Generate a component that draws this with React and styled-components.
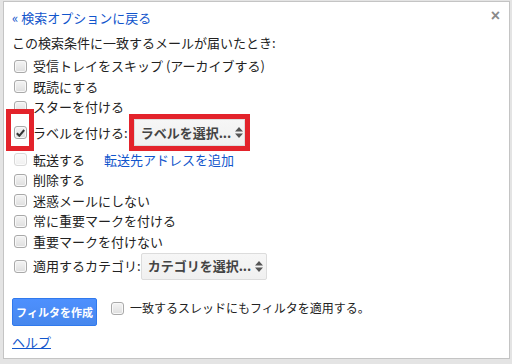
import React from 'react'
import styled, { createGlobalStyle } from 'styled-components'

const GlobalStyle = createGlobalStyle`
  html, body {
    margin: 0;
    padding: 0;
    background: #e4e4e4;
  }
  body {
    font-family: "Noto Sans CJK JP", "Liberation Sans", sans-serif;
    font-size: 13px;
    color: #222;
  }
`

const Page = styled.div`
  width: 512px;
  height: 364px;
  padding: 1px 2px 0 3px;
  box-sizing: border-box;
`

const Dialog = styled.div`
  position: relative;
  width: 507px;
  height: 358px;
  box-sizing: border-box;
  background: #fff;
  border: 1px solid #c4c4c4;
  padding: 6px 8px 0 8px;
  display: flex;
  flex-direction: column;
`

const Close = styled.span`
  position: absolute;
  top: 6px;
  right: 9px;
  font-family: "Liberation Sans", sans-serif;
  font-size: 16px;
  font-weight: bold;
  color: #8a8a8a;
  line-height: 16px;
`

const Link = styled.a`
  color: #15c;
  text-decoration: ${(p) => (p.$underline ? 'underline' : 'none')};
  cursor: pointer;
`

const BackLink = styled(Link)`
  height: 20px;
  line-height: 20px;
`

const Heading = styled.div`
  margin-top: 5px;
  height: 20px;
  line-height: 20px;
`

const List = styled.div`
  margin-top: 3px;
  display: flex;
  flex-direction: column;
`

const Row = styled.div`
  display: flex;
  align-items: center;
  height: ${(p) => p.$h || 20.5}px;
  margin-top: ${(p) => p.$mt || 0}px;
  line-height: 20px;
  white-space: nowrap;
`

const Box = styled.span`
  position: relative;
  flex: none;
  width: 11px;
  height: 11px;
  margin: 0 6px 0 2px;
  border: 1px solid ${(p) => (p.$disabled ? '#d8d8d8' : '#a9a9a9')};
  border-radius: 3px;
  background: ${(p) =>
    p.$disabled
      ? 'linear-gradient(#fafafa, #f0f0f0)'
      : 'linear-gradient(#f4f4f4, #dedede)'};
  box-shadow: inset 0 0 0 1px ${(p) => (p.$disabled ? '#fbfbfb' : '#f8f8f8')};
  display: flex;
  align-items: center;
  justify-content: center;
`

const Marked = styled.span`
  position: relative;
  display: flex;
  &::after {
    content: '';
    position: absolute;
    left: -6px;
    right: -1px;
    top: -17px;
    bottom: -12px;
    border: 5px solid #e3232b;
  }
`

const Select = styled.div`
  display: flex;
  align-items: center;
  justify-content: space-between;
  gap: 4px;
  box-sizing: border-box;
  width: ${(p) => p.$w}px;
  height: 27px;
  margin-left: ${(p) => p.$ml || 0}px;
  padding: 0 5px 0 6px;
  background: linear-gradient(#f6f6f6, #f0f0f0);
  border: 1px solid #dcdcdc;
  border-radius: ${(p) => (p.$marked ? 0 : 2)}px;
  font-weight: bold;
  color: #444;
  box-shadow: ${(p) => (p.$marked ? '0 0 0 5px #e3232b' : 'none')};
  svg {
    flex: none;
  }
`

const Forward = styled(Link)`
  margin-left: 19px;
`

const Footer = styled.div`
  display: flex;
  align-items: flex-start;
  margin-top: 18px;
`

const Button = styled.button`
  width: 85px;
  height: 28px;
  box-sizing: border-box;
  border: 1px solid #3079ed;
  border-radius: 2px;
  background: linear-gradient(#4d90fe, #4787ed);
  color: #fff;
  font-family: "Noto Sans CJK JP", sans-serif;
  font-size: 11px;
  font-weight: bold;
  padding: 0;
`

const ApplyAll = styled.label`
  display: flex;
  align-items: center;
  margin-left: 12px;
  height: 20px;
  font-size: 12px;
  line-height: 20px;
`

const Help = styled(Link)`
  margin-top: 6px;
  height: 20px;
  line-height: 20px;
  align-self: flex-start;
`

const Arrows = () => (
  <svg width="8" height="11" viewBox="0 0 8 11">
    <path d="M4 0 L8 4.5 L0 4.5 Z M0 6.5 L8 6.5 L4 11 Z" fill="#555" />
  </svg>
)

const Check = () => (
  <svg width="9" height="8" viewBox="0 0 9 8">
    <path d="M0.8 4.2 L3.3 6.8 L8.2 1" fill="none" stroke="#333" strokeWidth="2" />
  </svg>
)

const Checkbox = ({ checked, disabled }) => (
  <Box $disabled={disabled}>{checked && <Check />}</Box>
)

const options = [
  '受信トレイをスキップ (アーカイブする)',
  '既読にする',
  'スターを付ける',
]

const more = ['削除する', '迷惑メールにしない', '常に重要マークを付ける', '重要マークを付けない']

export default function App() {
  return (
    <>
      <GlobalStyle />
      <Page>
        <Dialog>
          <Close>×</Close>
          <BackLink>« 検索オプションに戻る</BackLink>
          <Heading>この検索条件に一致するメールが届いたとき:</Heading>
          <List>
            {options.map((o) => (
              <Row key={o}>
                <Checkbox />
                {o}
              </Row>
            ))}
            <Row $h={30}>
              <Marked>
                <Checkbox checked />
              </Marked>
              ラベルを付ける:
              <Select $w={111} $ml={6} $marked>
                <span>ラベルを選択...</span>
                <Arrows />
              </Select>
            </Row>
            <Row $mt={2}>
              <Checkbox disabled />
              転送する
              <Forward>転送先アドレスを追加</Forward>
            </Row>
            {more.map((o) => (
              <Row key={o}>
                <Checkbox />
                {o}
              </Row>
            ))}
            <Row $h={28}>
              <Checkbox />
              適用するカテゴリ:
              <Select $w={126} $ml={0}>
                <span>カテゴリを選択...</span>
                <Arrows />
              </Select>
            </Row>
          </List>
          <Footer>
            <Button>フィルタを作成</Button>
            <ApplyAll>
              <Checkbox />
              一致するスレッドにもフィルタを適用する。
            </ApplyAll>
          </Footer>
          <Help $underline>ヘルプ</Help>
        </Dialog>
      </Page>
    </>
  )
}
